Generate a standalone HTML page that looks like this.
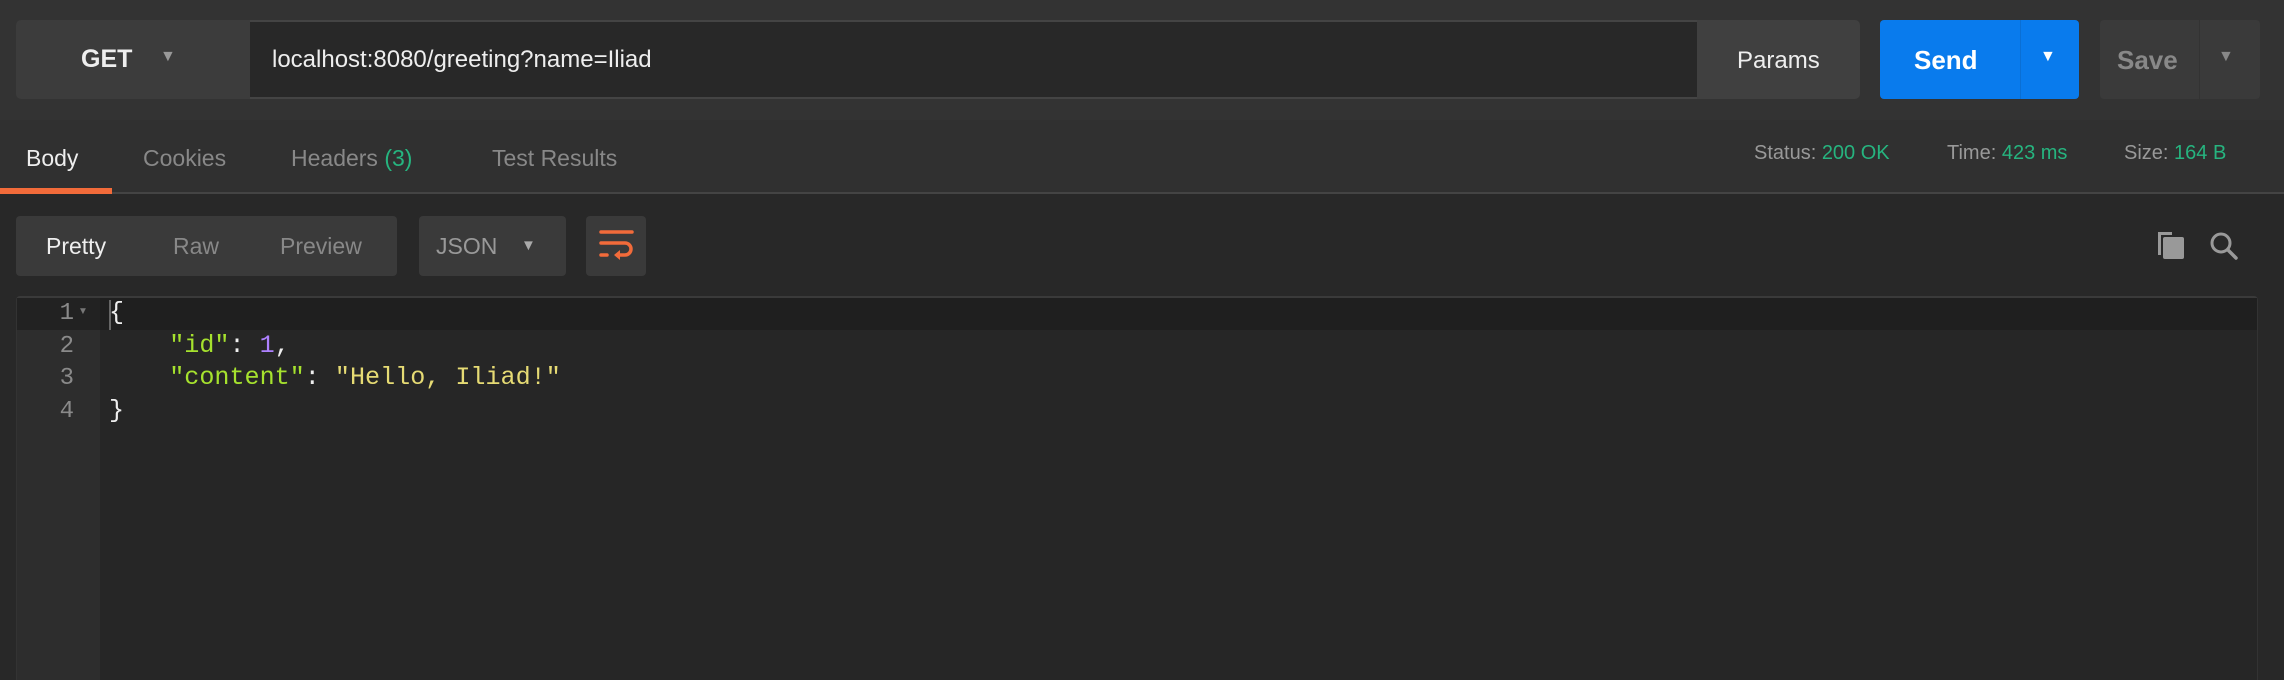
<!DOCTYPE html>
<html><head><meta charset="utf-8"><style>
*{margin:0;padding:0;box-sizing:border-box}
body{width:2284px;height:680px;background:#282828;position:relative;overflow:hidden;font-family:"Liberation Sans",sans-serif}
.a{position:absolute}
.t{position:absolute;white-space:nowrap}
</style></head><body>
<div class="a" style="left:0;top:0;width:2284px;height:120px;background:#333"></div>
<div class="a" style="left:16px;top:20px;width:234px;height:79px;background:#3c3c3c;border-radius:5px 0 0 5px"></div>
<div class="t" style="left:81px;top:45px;font-size:25px;font-weight:bold;color:#eee">GET</div>
<div class="t" style="left:160px;top:48px;font-size:16px;color:#999">▼</div>
<div class="a" style="left:250px;top:20px;width:1447px;height:79px;background:#282828;border-top:2px solid #444;border-bottom:2px solid #444"></div>
<div class="t" style="left:272px;top:46px;font-size:24px;color:#eee">localhost:8080/greeting?name=Iliad</div>
<div class="a" style="left:1697px;top:20px;width:163px;height:79px;background:#404040;border-radius:0 5px 5px 0"></div>
<div class="t" style="left:1737px;top:47px;font-size:24px;color:#eee">Params</div>
<div class="a" style="left:1880px;top:20px;width:199px;height:79px;background:#097bed;border-radius:4px"></div>
<div class="a" style="left:2020px;top:20px;width:1px;height:79px;background:#0a6fd4"></div>
<div class="t" style="left:1914px;top:45px;font-size:26px;font-weight:bold;color:#fff">Send</div>
<div class="t" style="left:2040px;top:48px;font-size:16px;color:#fff">▼</div>
<div class="a" style="left:2100px;top:20px;width:160px;height:79px;background:#3a3a3a;border-radius:4px"></div>
<div class="a" style="left:2199px;top:20px;width:1px;height:79px;background:#333"></div>
<div class="t" style="left:2117px;top:45px;font-size:26px;font-weight:bold;color:#888">Save</div>
<div class="t" style="left:2218px;top:48px;font-size:16px;color:#888">▼</div>

<div class="a" style="left:0;top:120px;width:2284px;height:74px;background:#303030;border-bottom:2px solid #444"></div>
<div class="a" style="left:0;top:188px;width:112px;height:6px;background:#f26b3a"></div>
<div class="t" style="left:26px;top:145px;font-size:23px;color:#eee">Body</div>
<div class="t" style="left:143px;top:145px;font-size:23px;color:#888">Cookies</div>
<div class="t" style="left:291px;top:145px;font-size:23px;color:#888">Headers <span style="color:#26b47f">(3)</span></div>
<div class="t" style="left:492px;top:145px;font-size:23px;color:#888">Test Results</div>
<div class="t" style="left:1754px;top:142px;font-size:20px;color:#999">Status: <span style="color:#26b47f">200 OK</span></div>
<div class="t" style="left:1947px;top:142px;font-size:20px;color:#999">Time: <span style="color:#26b47f">423 ms</span></div>
<div class="t" style="left:2124px;top:142px;font-size:20px;color:#999">Size: <span style="color:#26b47f">164 B</span></div>

<div class="a" style="left:16px;top:216px;width:381px;height:60px;background:#3a3a3a;border-radius:4px"></div>
<div class="t" style="left:46px;top:233px;font-size:23px;color:#eee">Pretty</div>
<div class="t" style="left:173px;top:233px;font-size:23px;color:#888">Raw</div>
<div class="t" style="left:280px;top:233px;font-size:23px;color:#888">Preview</div>
<div class="a" style="left:419px;top:216px;width:147px;height:60px;background:#3a3a3a;border-radius:4px"></div>
<div class="t" style="left:436px;top:233px;font-size:23px;color:#999">JSON</div>
<div class="t" style="left:521px;top:237px;font-size:15px;color:#aaa">▼</div>
<div class="a" style="left:586px;top:216px;width:60px;height:60px;background:#3a3a3a;border-radius:4px"></div>
<svg class="a" style="left:586px;top:216px" width="60" height="60" viewBox="0 0 60 60"><g stroke="#f26b3a" stroke-width="3.5" fill="none" stroke-linecap="round"><path d="M15 16H46"/><path d="M15 27H39a6 6 0 0 1 0 12H31"/><path d="M15 39H21"/></g><path d="M28 39l6-5v10z" fill="#f26b3a"/></svg>
<svg class="a" style="left:2156px;top:230px" width="32" height="32" viewBox="0 0 32 32"><path d="M2 2h14v3H5v20H2z" fill="#999"/><rect x="7" y="7" width="21" height="22" rx="2" fill="#999"/></svg>
<svg class="a" style="left:2208px;top:230px" width="32" height="32" viewBox="0 0 32 32"><circle cx="13" cy="13" r="9" stroke="#999" stroke-width="3" fill="none"/><path d="M20 20l8 8" stroke="#999" stroke-width="3.5" stroke-linecap="round"/></svg>

<div class="a" style="left:16px;top:296px;width:2242px;height:384px;background:#262626;border-top:2px solid #3a3a3a;border-left:1px solid #333;border-right:1px solid #333;border-radius:4px 4px 0 0"></div>
<div class="a" style="left:17px;top:298px;width:83px;height:382px;background:#2d2d2d"></div>
<div class="a" style="left:100px;top:298px;width:2157px;height:32px;background:#1f1f1f"></div>
<div class="a" style="left:17px;top:298px;width:83px;height:32px;background:#222"></div>
<div class="a" style="left:109px;top:300px;width:2px;height:30px;background:#666"></div>
<div style="position:absolute;left:17px;top:298px;width:57px;text-align:right;font-family:'Liberation Mono',monospace;font-size:24px;line-height:32.5px;color:#8a8a8a">1<br>2<br>3<br>4</div>
<div class="t" style="left:78px;top:306px;font-size:10px;color:#777">▼</div>
<div style="position:absolute;left:109px;top:297px;font-family:'Liberation Mono',monospace;font-size:25.1px;line-height:32.5px;color:#eee;white-space:pre">{
    <span style="color:#a6e22e">"id"</span>: <span style="color:#ae81ff">1</span>,
    <span style="color:#a6e22e">"content"</span>: <span style="color:#e6db74">"Hello, Iliad!"</span>
}</div>
</body></html>
